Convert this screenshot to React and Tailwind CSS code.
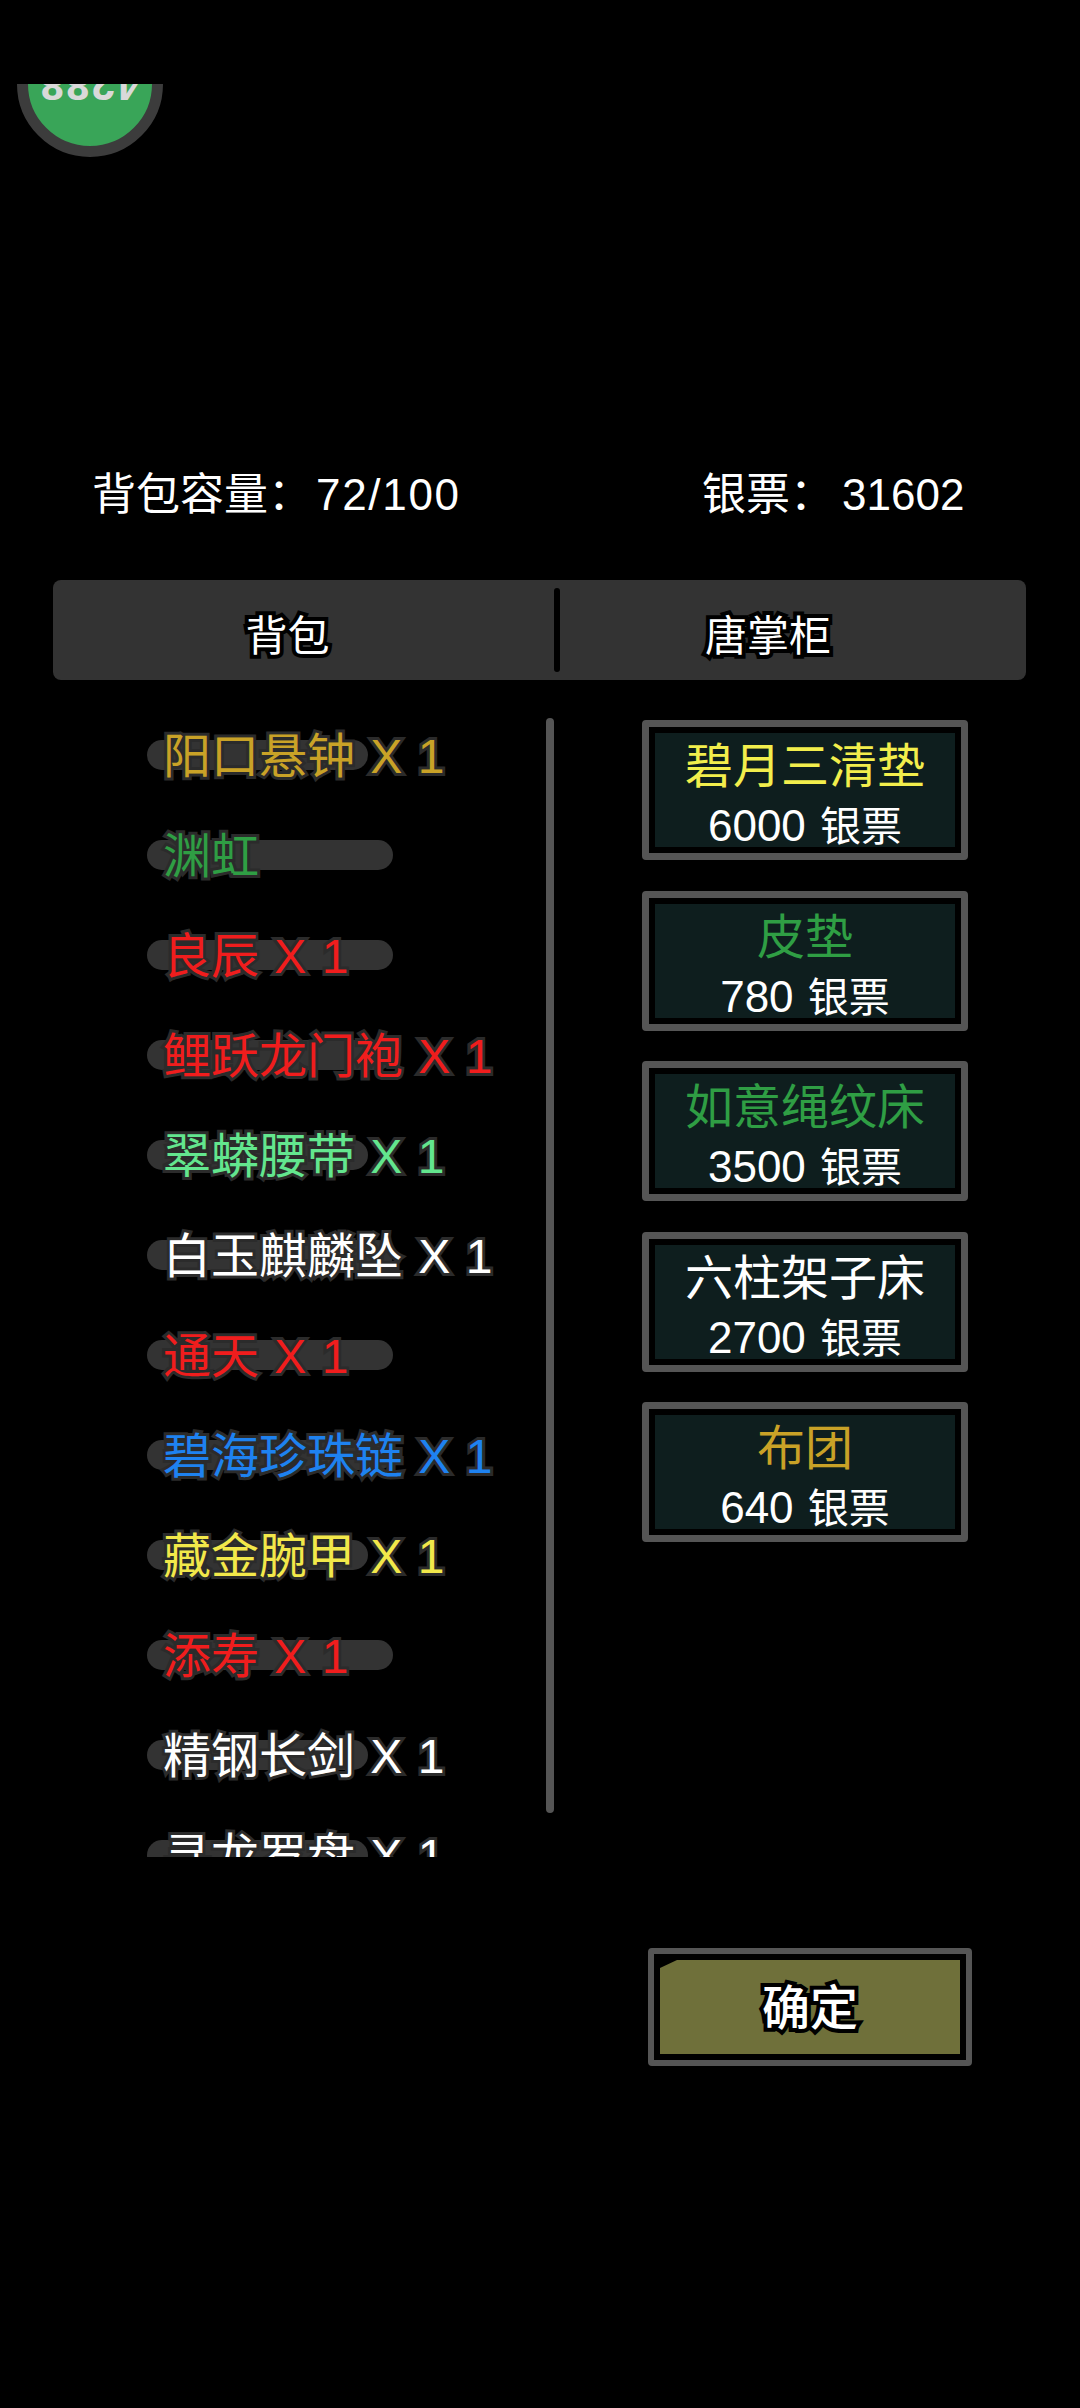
const FONT = "font-['Liberation_Sans','Noto_Sans_CJK_SC',sans-serif]";

const ITEMS = [
  { name: '阳口悬钟 X 1', color: 'text-[#c9a227]', width: 'w-[221px]' },
  { name: '渊虹', color: 'text-[#2f9e44]', width: 'w-[246px]' },
  { name: '良辰 X 1', color: 'text-[#f01d1d]', width: 'w-[246px]' },
  { name: '鲤跃龙门袍 X 1', color: 'text-[#f01d1d]', width: 'w-[246px]' },
  { name: '翠蟒腰带 X 1', color: 'text-[#63e68e]', width: 'w-[221px]' },
  { name: '白玉麒麟坠 X 1', color: 'text-white', width: 'w-[246px]' },
  { name: '通天 X 1', color: 'text-[#f01d1d]', width: 'w-[246px]' },
  { name: '碧海珍珠链 X 1', color: 'text-[#1e82f0]', width: 'w-[246px]' },
  { name: '藏金腕甲 X 1', color: 'text-[#f2e84a]', width: 'w-[221px]' },
  { name: '添寿 X 1', color: 'text-[#f01d1d]', width: 'w-[246px]' },
  { name: '精钢长剑 X 1', color: 'text-white', width: 'w-[221px]' },
  { name: '寻龙罗盘 X 1', color: 'text-white', width: 'w-[221px]' },
];

const SHOP = [
  { name: '碧月三清垫', price: 6000, color: 'text-[#f2ee4c]' },
  { name: '皮垫', price: 780, color: 'text-[#2f9e44]' },
  { name: '如意绳纹床', price: 3500, color: 'text-[#2f9e44]' },
  { name: '六柱架子床', price: 2700, color: 'text-white' },
  { name: '布团', price: 640, color: 'text-[#c9a227]' },
];

function ItemRow({ item }) {
  return (
    <div className="flex h-[100px] shrink-0 items-center">
      <div className={`flex h-[30px] items-center rounded-full bg-[#333333] pl-[16px] ${item.width}`}>
        <span className={`whitespace-nowrap pt-[3px] text-[48px] leading-none [word-spacing:2px] [-webkit-text-stroke:6px_#2b2b2b] [paint-order:stroke_fill] ${item.color}`}>
          {item.name}
        </span>
      </div>
    </div>
  );
}

function ShopCard({ item }) {
  return (
    <div className="h-[140px] w-[326px] rounded-[4px] border-[7px] border-[#555555] bg-black p-[6px]">
      <div className="flex h-full flex-col items-center bg-[#0e1e1e]">
        <span className={`mt-[6px] text-[48px] leading-[56px] ${item.color}`}>{item.name}</span>
        <span className="mt-[6px] text-[44px] leading-[50px] text-white [word-spacing:2px]">
          {item.price} <span className="text-[41px]">银票</span>
        </span>
      </div>
    </div>
  );
}

export default function App() {
  return (
    <div className={`h-[2408px] w-[1080px] overflow-hidden bg-black ${FONT}`}>
      {/* clipped level badge */}
      <div className="mt-[84px] ml-[17px] h-[73px] w-[146px] overflow-hidden">
        <div className="-mt-[73px] flex h-[146px] w-[146px] items-center justify-center rounded-full border-[11px] border-[#3c3c3c] bg-[#39a558]">
          <span className="rotate-180 text-[44px] font-bold leading-none tracking-[1px] text-[#d9d9d9]">4288</span>
        </div>
      </div>

      <div className="mt-[313px] flex h-[50px] items-center text-[44px] leading-none text-white">
        <span className="ml-[92px] w-[224px]">背包容量：</span>
        <span className="w-[386px] tracking-[1.7px]">72/100</span>
        <span className="w-[140px]">银票：</span>
        <span>31602</span>
      </div>

      <div className="ml-[53px] mt-[60px] flex h-[100px] w-[973px] items-center rounded-[8px] bg-[#333333] text-[42px] leading-none text-white [-webkit-text-stroke:8px_#000000] [paint-order:stroke_fill]">
        <div className="flex flex-1 justify-center pt-[14px] pr-[32px]">背包</div>
        <div className="h-[84px] w-[6px] rounded-full bg-black" />
        <div className="flex w-[466px] justify-center pt-[14px] pr-[50px]">唐掌柜</div>
      </div>

      <div className="relative mt-[25px] flex h-[1152px]">
        <div className="ml-[147px] flex h-full w-[420px] flex-col overflow-hidden">
          {ITEMS.map((item) => (
            <ItemRow key={item.name} item={item} />
          ))}
        </div>
        {/* scrollbar thumb */}
        <div className="absolute top-[13px] left-[546px] h-[1095px] w-[8px] rounded-full bg-[#555555]" />
        <div className="ml-[75px] flex flex-col gap-[30.5px] pt-[15px]">
          {SHOP.map((item) => (
            <ShopCard key={item.name} item={item} />
          ))}
        </div>
      </div>

      <div className="mt-[91px] ml-[648px] h-[118px] w-[324px] rounded-[4px] border-[6px] border-[#555555] bg-black p-[6px]">
        <div className="flex h-full items-center justify-center bg-[#6f703a] [clip-path:polygon(17px_0,100%_0,100%_100%,0_100%,0_8px)]">
          <span className="pt-[4px] text-[48px] font-medium leading-none text-white [-webkit-text-stroke:8px_#000000] [paint-order:stroke_fill]">确定</span>
        </div>
      </div>
    </div>
  );
}
